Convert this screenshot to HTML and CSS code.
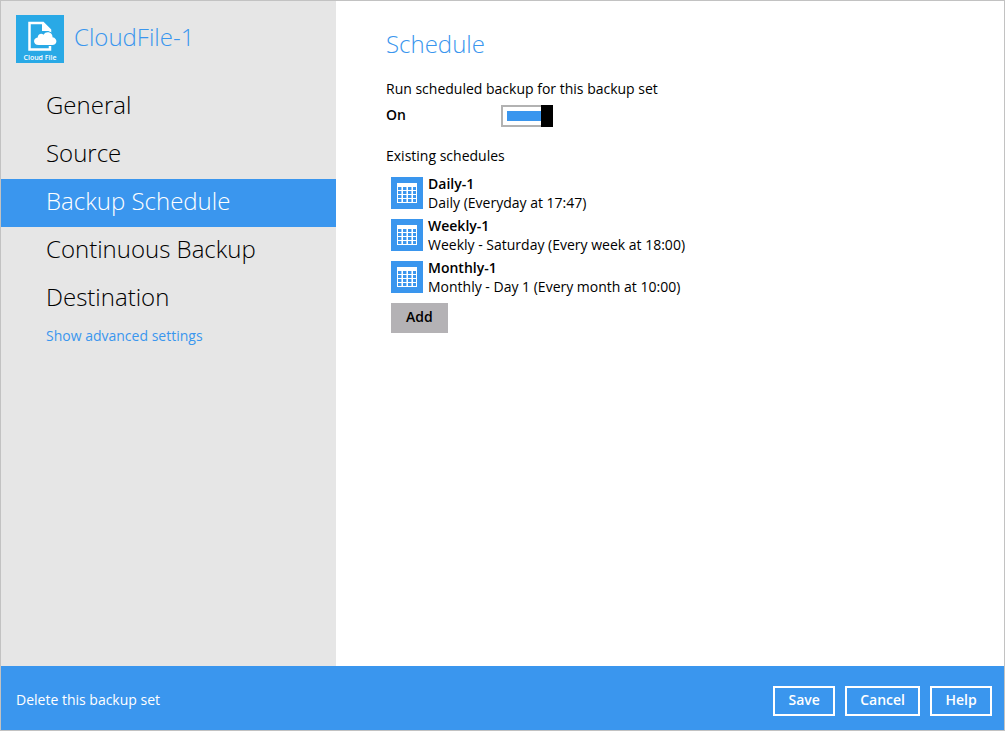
FILE: index.html
```
<!DOCTYPE html>
<html lang="en">
<head>
  <meta charset="UTF-8">
  <meta name="viewport" content="width=device-width, initial-scale=1.0">
  <title>CloudFile-1 | Backup Schedule</title>
  <link rel="stylesheet" href="styles.css">
</head>
<body>

  <!-- Calendar icon used by every schedule -->
  <svg class="sprite" aria-hidden="true">
    <symbol id="calendar" viewBox="0 0 32 32">
      <rect width="32" height="32" fill="#3a96ee"/>
      <rect x="6" y="6" width="20" height="20" fill="#fff"/>
      <path d="M8.500 10v15M13.500 10v15M18.500 10v15M23.500 10v15" stroke="#3a96ee" stroke-width="3" stroke-dasharray="3 1"/>
      <path d="M10.500 10v15M15.500 10v15M20.500 10v15" stroke="#a9d1f8" stroke-dasharray="3 1"/>
    </symbol>
  </svg>

  <div class="window">
    <div class="main">

      <aside class="sidebar">
        <div class="backup-set">
          <svg class="logo" viewBox="0 0 48 48" role="img" aria-label="Cloud File">
            <rect width="48" height="48" fill="#29a9e6"/>
            <path d="M34 30v4.500H13.500V8H27l7 7v4" fill="none" stroke="#fff" stroke-width="2.500"/>
            <path d="M26 7v9h9" fill="#fff"/>
            <path d="M22.500 30c-5.500 0-6-7-.8-7.500 0-3.500 4-5 5.800-2.700 2.400-4.500 9.300-2.700 9 2.400 5.500 1 5 7.800-.2 7.800z" fill="#fff" stroke="#29a9e6" stroke-width="2" paint-order="stroke"/>
            <text class="logo-text" x="24" y="45" text-anchor="middle">Cloud File</text>
          </svg>
          <h1>CloudFile-1</h1>
        </div>

        <nav class="menu">
          <a href="#general">General</a>
          <a href="#source">Source</a>
          <a href="#schedule" class="active" aria-current="page">Backup Schedule</a>
          <a href="#continuous">Continuous Backup</a>
          <a href="#destination">Destination</a>
        </nav>
        <a href="#advanced" class="advanced-link">Show advanced settings</a>
      </aside>

      <main class="content">
        <h2>Schedule</h2>
        <label class="switch-label" for="run-schedule">Run scheduled backup for this backup set</label>
        <div class="switch-row">
          <span class="switch-state">On</span>
          <input type="checkbox" class="switch" id="run-schedule" checked>
        </div>

        <h3>Existing schedules</h3>
        <ul class="schedule-list">
          <li class="schedule">
            <svg class="schedule-icon" aria-hidden="true"><use href="#calendar"/></svg>
            <div>
              <h4>Daily-1</h4>
              <p>Daily (Everyday at 17:47)</p>
            </div>
          </li>
          <li class="schedule">
            <svg class="schedule-icon" aria-hidden="true"><use href="#calendar"/></svg>
            <div>
              <h4>Weekly-1</h4>
              <p>Weekly - Saturday (Every week at 18:00)</p>
            </div>
          </li>
          <li class="schedule">
            <svg class="schedule-icon" aria-hidden="true"><use href="#calendar"/></svg>
            <div>
              <h4>Monthly-1</h4>
              <p>Monthly - Day 1 (Every month at 10:00)</p>
            </div>
          </li>
        </ul>
        <button type="button" class="add-button">Add</button>
      </main>

    </div>

    <footer class="footer">
      <a href="#delete" class="delete-link">Delete this backup set</a>
      <div class="footer-actions">
        <button type="button">Save</button>
        <button type="button">Cancel</button>
        <button type="button">Help</button>
      </div>
    </footer>
  </div>

</body>
</html>
```
FILE: styles.css
```
* {
  box-sizing: border-box;
}

body {
  margin: 0;
  font-family: 'Open Sans', sans-serif;
  font-size: 14px;
  line-height: 20px;
  color: #000;
}

h1, h2, h3, h4, p, ul {
  margin: 0;
  padding: 0;
}

.sprite {
  display: none;
}

.window {
  display: flex;
  flex-direction: column;
  min-height: 100vh;
  border: 1px solid #c2c2c2;
  background: #fff;
}

.main {
  display: flex;
  flex: 1;
}

/* Sidebar */
.sidebar {
  flex: 0 0 335px;
  background: #e6e6e6;
}

.backup-set {
  display: flex;
  gap: 10px;
  padding: 14px 15px 20px;
}

.logo {
  width: 48px;
  height: 48px;
}

.logo-text {
  font-size: 7px;
  font-weight: 600;
  fill: #fff;
}

h1, h2 {
  font-size: 24px;
  font-weight: 300;
  color: #3a96ee;
}

h1 {
  line-height: 44px;
}

.menu a {
  display: block;
  padding: 0 45px 4px;
  font-size: 24px;
  font-weight: 300;
  line-height: 44px;
  color: #000;
  text-decoration: none;
}

.menu a.active {
  background: #3a96ee;
  color: #fff;
}

.advanced-link {
  display: block;
  padding: 3px 45px;
  color: #3a96ee;
  text-decoration: none;
}

/* Schedule page */
.content {
  flex: 1;
  padding: 27px 50px;
}

h2 {
  margin-bottom: 19px;
  line-height: 32px;
}

.switch-label {
  display: block;
  margin-bottom: 6px;
}

.switch-row {
  display: flex;
  margin-bottom: 19px;
}

.switch-state {
  width: 115px;
  font-weight: 600;
}

.switch {
  appearance: none;
  width: 52px;
  height: 22px;
  margin: 0;
  padding: 4px;
  border: 2px solid #b2b2b2;
  background: linear-gradient(to right, #000 12px, #fff 12px) border-box;
  cursor: pointer;
}

.switch:checked {
  padding-right: 0;
  border-right-width: 12px;
  border-image: linear-gradient(to right, #b2b2b2 40px, #000 40px) 2 12 2 2;
  background: #3a96ee content-box;
}

h3 {
  margin-bottom: 8px;
  font-size: 14px;
  font-weight: 400;
}

.schedule-list {
  display: flex;
  flex-direction: column;
  gap: 4px;
  margin: 0 5px 7px;
  list-style: none;
}

.schedule {
  display: flex;
  align-items: center;
  gap: 5px;
  line-height: 19px;
}

.schedule-icon {
  width: 32px;
  height: 32px;
}

.schedule h4 {
  font-size: 14px;
  font-weight: 600;
}

button {
  height: 30px;
  font-family: inherit;
  font-size: 14px;
  font-weight: 600;
  cursor: pointer;
}

.add-button {
  margin-left: 5px;
  padding: 0 15px 4px;
  border: none;
  background: #b4b2b5;
  color: #000;
}

/* Bottom bar */
.footer {
  display: flex;
  justify-content: space-between;
  align-items: center;
  padding: 20px 12px 14px 15px;
  background: #3a96ee;
}

.delete-link {
  padding-bottom: 2px;
  color: #fff;
  text-decoration: none;
}

.footer-actions {
  display: flex;
  gap: 10px;
}

.footer-actions button {
  min-width: 62px;
  padding: 0 13px 4px;
  border: 2px solid #fff;
  background: transparent;
  color: #fff;
}
```
